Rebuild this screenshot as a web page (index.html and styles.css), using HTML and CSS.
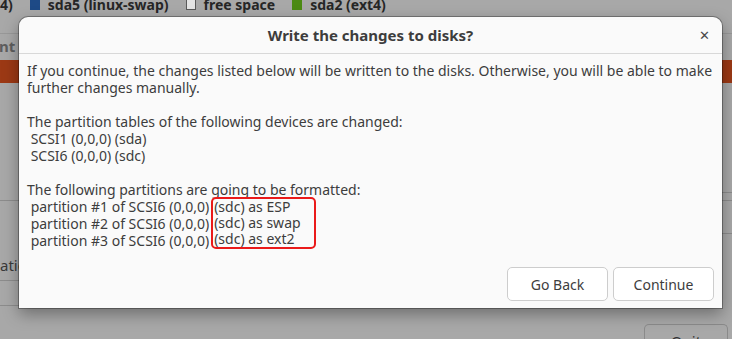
FILE: index.html
```html
<!DOCTYPE html>
<html lang="en">
<head>
  <meta charset="UTF-8">
  <title>Write the changes to disks?</title>
  <link rel="stylesheet" href="styles.css">
</head>
<body>
  <div class="app">
    <div class="legend">
      <span class="item">4)</span>
      <span class="item"><i class="swatch blue"></i>sda5 (linux-swap)</span>
      <span class="item"><i class="swatch empty"></i>free space</span>
      <span class="item"><i class="swatch green"></i>sda2 (ext4)</span>
    </div>

    <div class="panes">
      <div class="pane left">
        <div class="thead">nt</div>
        <div class="row selected"></div>
        <div class="fill"></div>
        <div class="row line"></div>
        <div class="row label">atio</div>
        <div class="row line"></div>
        <div class="row"></div>
      </div>
      <div class="pane right">
        <div class="thead"></div>
        <div class="row selected"></div>
        <div class="fill"></div>
        <div class="row line thin"></div>
        <div class="row label">w</div>
        <div class="row"></div>
        <div class="quit">Quit</div>
      </div>
    </div>
  </div>

  <div class="dialog">
    <div class="dialog-header">
      <h1>Write the changes to disks?</h1>
      <span class="close">&#x2715;</span>
    </div>
    <div class="dialog-body">
      <div class="section">
        <p>If you continue, the changes listed below will be written to the disks. Otherwise, you will be able to make further changes manually.</p>
      </div>
      <div class="section">
        <p>The partition tables of the following devices are changed:</p>
        <p class="pre"> SCSI1 (0,0,0) (sda)
 SCSI6 (0,0,0) (sdc)</p>
      </div>
      <div class="section">
        <p>The following partitions are going to be formatted:</p>
        <div class="parts">
          <div class="pre"> partition #1 of SCSI6 (0,0,0)
 partition #2 of SCSI6 (0,0,0)
 partition #3 of SCSI6 (0,0,0)</div>
          <div class="pre mark">(sdc) as ESP
(sdc) as swap
(sdc) as ext2</div>
        </div>
      </div>
    </div>
    <div class="dialog-footer">
      <button class="btn">Go Back</button>
      <button class="btn">Continue</button>
    </div>
  </div>
</body>
</html>
```

FILE: styles.css
```css
* {
  margin: 0;
  padding: 0;
  box-sizing: border-box;
  font-family: 'Noto Sans', 'Open Sans', sans-serif;
}

body {
  width: 732px;
  height: 339px;
  overflow: hidden;
  background: #a8a8a8;
  color: #3d3d3d;
}

/* background window (dimmed) */
.app {
  height: 100%;
  display: flex;
  flex-direction: column;
  overflow: hidden;
}

.legend {
  display: flex;
  align-items: flex-start;
  gap: 17px;
  margin-top: -4px;
  font-size: 14px;
  font-weight: 700;
  line-height: 18px;
  color: #262626;
  white-space: nowrap;
}

.legend .item {
  display: flex;
  align-items: center;
  gap: 8px;
}

.swatch {
  display: inline-block;
  width: 10px;
  height: 11px;
  margin-top: -1px;
}

.swatch.blue { background: #1e4a86; }
.swatch.green { background: #4b8a12; }
.swatch.empty {
  background: #e4e4e4;
  border: 1px solid #5a5a5a;
}

.panes {
  flex: 1;
  display: flex;
  justify-content: space-between;
}

.pane {
  display: flex;
  flex-direction: column;
}

.pane.left { width: 40px; }
.pane.right { width: 88px; }

.thead {
  margin-top: 19px;
  height: 27px;
  border-top: 1px solid #989898;
  font-size: 15px;
  font-weight: 700;
  line-height: 24px;
  color: #5e5e5e;
  text-indent: -1px;
}

.row.selected {
  height: 23px;
  background: #9c3915;
}

.fill {
  height: 117px;
}

.row.line {
  height: 80px;
  border-top: 1px solid #8c8c8c;
}

.pane.left .row.label {
  height: 25px;
  margin-top: -25px;
  font-size: 15px;
  line-height: 20px;
  color: #3a3a3a;
}

.pane.right .row.line.thin {
  height: 9px;
  margin-top: -8px;
  border-top: 1px solid #8c8c8c;
  border-bottom: 1px solid #8c8c8c;
}

.pane.right .row.label {
  height: 33px;
  padding-top: 8px;
  border-bottom: 1px solid #8c8c8c;
  font-size: 15px;
  line-height: 20px;
  color: #2a2a2a;
}

.pane.left .row.line + .row.label + .row.line {
  height: 25px;
}

.pane.left .row:last-child {
  border-top: 1px solid #8c8c8c;
}

.quit {
  margin-top: auto;
  height: 15px;
  width: 84px;
  border: 1px solid #8a8a8a;
  border-bottom: none;
  border-radius: 5px 5px 0 0;
  text-align: center;
  font-size: 15px;
  line-height: 32px;
  color: #333;
  overflow: hidden;
}

/* modal dialog, lies over the window */
.dialog {
  position: absolute;
  left: 19px;
  top: 17px;
  width: 703px;
  height: 291px;
  display: flex;
  flex-direction: column;
  background: #fafafa;
  border-radius: 9px 9px 0 0;
  box-shadow: 0 0 0 1px rgba(0, 0, 0, 0.3), 0 6px 16px rgba(0, 0, 0, 0.35);
}

.dialog-header {
  flex-shrink: 0;
  height: 37px;
  display: flex;
  align-items: center;
  justify-content: center;
  border-bottom: 1px solid #d8d8d8;
  position: relative;
}

.dialog-header h1 {
  font-size: 15px;
  font-weight: 700;
  color: #3d3d3d;
}

.close {
  position: absolute;
  right: 12px;
  top: 9px;
  font-size: 13px;
  color: #4a4a4a;
}

.dialog-body {
  padding: 8px 8px 0;
  font-size: 14px;
  line-height: 17px;
}

.section {
  margin-bottom: 17px;
}

.pre {
  white-space: pre;
}

.parts {
  display: flex;
}

.mark {
  margin: -1px 0 0 2px;
  padding: 0 13px 0 1px;
  border: 2px solid #ea1a1a;
  border-radius: 5px;
  line-height: 16px;
}

.dialog-footer {
  margin-top: auto;
  padding: 0 8px 7px;
  display: flex;
  justify-content: flex-end;
  gap: 5px;
}

.btn {
  width: 101px;
  height: 34px;
  background: #ffffff;
  border: 1px solid #cdcdcd;
  border-radius: 5px;
  font-size: 14px;
  color: #3d3d3d;
}
```
